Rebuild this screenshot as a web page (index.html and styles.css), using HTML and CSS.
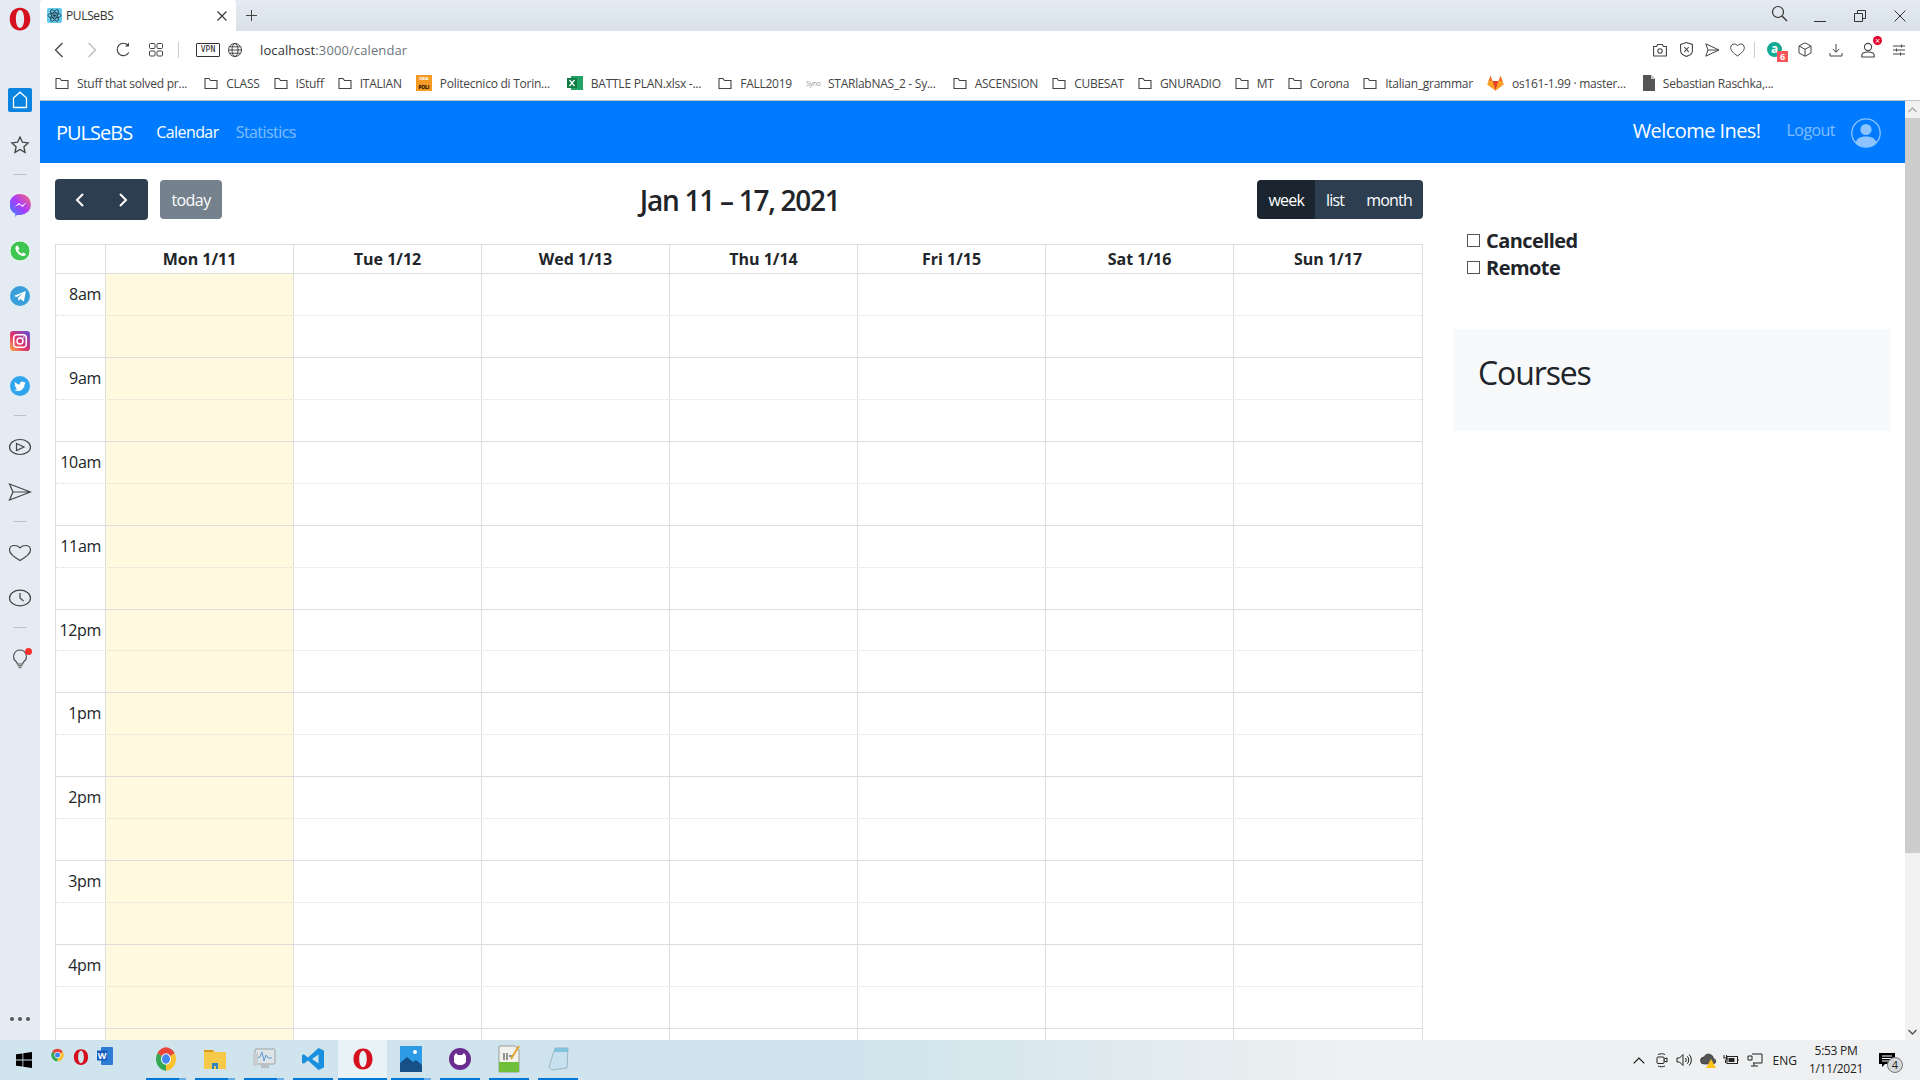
FILE: index.html
```html
<!DOCTYPE html>
<html lang="en">
<head>
    <meta charset="UTF-8">
    <title>PULSeBS</title>
    <link rel="stylesheet" href="styles.css">
</head>
<body>
<svg class="defs" width="0" height="0">
    <defs>
        <symbol id="folder" viewBox="0 0 14 14"><path d="M1 2.500h4l1.500 2h6.500v8H1z" fill="none" stroke="#444" stroke-width="1.100"/></symbol>
        <symbol id="chrome" viewBox="0 0 24 24">
            <path d="M12 12L3.340 7A10 10 0 0 1 20.660 7Z" fill="#e8453c"/>
            <path d="M12 12L20.660 7A10 10 0 0 1 12 22Z" fill="#fbc02d"/>
            <path d="M12 12L12 22A10 10 0 0 1 3.340 7Z" fill="#34a853"/>
            <circle cx="12" cy="12" r="5" fill="#fff"/><circle cx="12" cy="12" r="4" fill="#4285f4"/>
        </symbol>
        <symbol id="opera" viewBox="0 0 24 24">
            <path fill-rule="evenodd" d="M12 1.500c6 0 9.500 4.600 9.500 10.500S18 22.500 12 22.500 2.500 17.900 2.500 12 6 1.500 12 1.500zM12 3.800c-2.300 0-3.800 3.600-3.800 8.200s1.500 8.200 3.800 8.200 3.800-3.600 3.800-8.200S14.300 3.800 12 3.800z" fill="#d5101f"/>
        </symbol>
        <linearGradient id="insta" x1="0" y1="1" x2="1" y2="0">
            <stop offset="0" stop-color="#fdb045"/><stop offset=".45" stop-color="#e1306c"/><stop offset="1" stop-color="#5b51d8"/>
        </linearGradient>
        <linearGradient id="msgr" x1="0" y1="1" x2="1" y2="0">
            <stop offset="0" stop-color="#2f8bff"/><stop offset=".5" stop-color="#a83bff"/><stop offset="1" stop-color="#ff6a6a"/>
        </linearGradient>
    </defs>
</svg>

<div class="desktop">
    <div class="window">
        <aside class="sidebar">
            <div class="side-logo"><svg width="26" height="26"><use href="#opera"/></svg></div>
            <div class="side-home">
                <svg width="16" height="18" viewBox="0 0 16 18"><path d="M1.500 7L8 1.200 14.500 7v9.500h-13z" fill="none" stroke="#fff" stroke-width="1.300"/></svg>
            </div>
            <div class="side-item">
                <svg width="20" height="20" viewBox="0 0 24 24"><path d="M12 2.500l2.900 6.200 6.800.8-5 4.600 1.300 6.700-6-3.400-6 3.400 1.300-6.700-5-4.600 6.800-.8z" fill="none" stroke="#444" stroke-width="1.600"/></svg>
            </div>
            <div class="side-sep"></div>
            <div class="side-item">
                <svg width="21" height="23" viewBox="0 0 20 22"><path d="M10 0a10 10 0 0 1 0 20l-3.500.2-1.500 1.800v-3A10 10 0 0 1 10 0z" fill="url(#msgr)"/><path d="M4.500 12.500l4-4 3 2.500 4.500-3-4 4.500-3-2.500z" fill="#fff"/></svg>
            </div>
            <div class="side-item">
                <svg width="22" height="22" viewBox="0 0 24 24"><circle cx="12" cy="12" r="11" fill="#3fc551" stroke="#fff"/><path d="M9 6c-.8 0-2 1-2 2.800 0 4 4.600 8.700 8.800 8.700 1.700 0 2.700-1.200 2.700-2.200 0-.4-2.600-1.800-3.100-1.800-.5 0-1 1.200-1.500 1.200-.9 0-3.600-2.400-3.700-3.600 0-.5 1.100-1 1.100-1.500C11.300 9 9.800 6 9 6z" fill="#fff"/></svg>
            </div>
            <div class="side-item">
                <svg width="20" height="20" viewBox="0 0 24 24"><circle cx="12" cy="12" r="12" fill="#37a0da"/><path d="M4.500 12l14.500-6-2.300 12.500-4.200-3-2.300 2.200-.5-3.700 6-5.500-7.500 4.700z" fill="#fff"/></svg>
            </div>
            <div class="side-item">
                <svg width="20" height="20" viewBox="0 0 24 24"><rect width="24" height="24" rx="4" fill="url(#insta)"/><rect x="4.500" y="4.500" width="15" height="15" rx="4" fill="none" stroke="#fff" stroke-width="1.800"/><circle cx="12" cy="12" r="3.600" fill="none" stroke="#fff" stroke-width="1.800"/><circle cx="16.500" cy="7.500" r="1" fill="#fff"/></svg>
            </div>
            <div class="side-item">
                <svg width="20" height="20" viewBox="0 0 24 24"><circle cx="12" cy="12" r="12" fill="#2fa5ee"/><g transform="translate(5 5.500) scale(.58)"><path d="M23.953 4.570a10 10 0 01-2.825.775 4.958 4.958 0 002.163-2.723c-.951.555-2.005.959-3.127 1.184a4.920 4.920 0 00-8.384 4.482C7.690 8.095 4.067 6.130 1.640 3.162a4.822 4.822 0 00-.666 2.475c0 1.710.870 3.213 2.188 4.096a4.904 4.904 0 01-2.228-.616v.060a4.923 4.923 0 003.946 4.827 4.996 4.996 0 01-2.212.085 4.936 4.936 0 004.604 3.417 9.867 9.867 0 01-6.102 2.105c-.390 0-.779-.023-1.170-.067a13.995 13.995 0 007.557 2.209c9.053 0 13.998-7.496 13.998-13.985 0-.210 0-.420-.015-.630A9.935 9.935 0 0024 4.590z" fill="#fff"/></g></svg>
            </div>
            <div class="side-sep"></div>
            <div class="side-item">
                <svg width="24" height="18" viewBox="0 0 24 18"><ellipse cx="12" cy="9" rx="10.500" ry="7.500" fill="none" stroke="#444" stroke-width="1.200"/><path d="M8.500 5.500L16 9l-7.500 3.500z" fill="none" stroke="#444" stroke-width="1.200"/></svg>
            </div>
            <div class="side-item">
                <svg width="24" height="18" viewBox="0 0 24 18"><path d="M1.500 1L22.500 9 1.500 17 5 9zM5 9h17.500" fill="none" stroke="#444" stroke-width="1.200"/></svg>
            </div>
            <div class="side-sep"></div>
            <div class="side-item">
                <svg width="24" height="18" viewBox="0 0 24 18"><path d="M12 16.500C5 12.500 1.500 9.800 1.500 6 1.500 3.400 3.600 1.500 6.200 1.500c2.400 0 4.300.7 5.800 2.300 1.500-1.600 3.400-2.300 5.800-2.300 2.600 0 4.700 1.900 4.700 4.500 0 3.800-3.500 6.500-10.500 10.500z" fill="none" stroke="#444" stroke-width="1.200"/></svg>
            </div>
            <div class="side-item">
                <svg width="24" height="18" viewBox="0 0 24 18"><ellipse cx="12" cy="9" rx="10.500" ry="7.800" fill="none" stroke="#444" stroke-width="1.200"/><path d="M12 4v5l3.500 3" fill="none" stroke="#444" stroke-width="1.200"/></svg>
            </div>
            <div class="side-sep"></div>
            <div class="side-item side-bulb">
                <svg width="18" height="20" viewBox="0 0 18 20"><path d="M9 1a6.500 6.500 0 0 0-4 11.500c.8.800 1.200 1.500 1.300 2.500h5.400c.1-1 .5-1.700 1.300-2.500A6.500 6.500 0 0 0 9 1z" fill="none" stroke="#555" stroke-width="1.200"/><path d="M6.500 16.500h5M7.500 18.500h3" stroke="#777" stroke-width="1.400"/></svg>
                <span class="bulb-dot"></span>
            </div>
            <div class="side-more"><i></i><i></i><i></i></div>
        </aside>

        <div class="browser">
            <div class="tabbar">
                <div class="tab">
                    <svg class="favicon" width="15" height="15" viewBox="0 0 15 15"><rect width="15" height="15" rx="2" fill="#61c9ea"/><g fill="none" stroke="#24323d" stroke-width=".8"><ellipse cx="7.500" cy="7.500" rx="6.500" ry="2.600"/><ellipse cx="7.500" cy="7.500" rx="6.500" ry="2.600" transform="rotate(60 7.500 7.500)"/><ellipse cx="7.500" cy="7.500" rx="6.500" ry="2.600" transform="rotate(120 7.500 7.500)"/></g><circle cx="7.500" cy="7.500" r="1.300" fill="#24323d"/></svg>
                    <span class="tab-title">PULSeBS</span>
                    <svg class="tab-close" width="10" height="10" viewBox="0 0 10 10"><path d="M.5.500l9 9M9.500.500l-9 9" stroke="#333" stroke-width="1.100"/></svg>
                </div>
                <svg class="tab-plus" width="11" height="11" viewBox="0 0 11 11"><path d="M5.500 0v11M0 5.500h11" stroke="#444"/></svg>
                <div class="win-controls">
                    <svg class="ctl-search" width="17" height="17" viewBox="0 0 17 17"><circle cx="7" cy="7" r="5.500" fill="none" stroke="#333" stroke-width="1.200"/><path d="M11 11l5 5" stroke="#333" stroke-width="1.400"/></svg>
                    <svg class="ctl-btn" width="12" height="12" viewBox="0 0 12 12"><path d="M0 11.500h12" stroke="#333"/></svg>
                    <svg class="ctl-btn" width="12" height="12" viewBox="0 0 12 12"><path d="M.5 3.500h8v8h-8zM3.500 3.500v-3h8v8h-3" fill="none" stroke="#333"/></svg>
                    <svg class="ctl-btn" width="12" height="12" viewBox="0 0 12 12"><path d="M.5.500l11 11M11.500.500l-11 11" stroke="#333"/></svg>
                </div>
            </div>

            <div class="addressbar">
                <svg class="ab-back" width="10" height="16" viewBox="0 0 10 16"><path d="M8.500 1L1.500 8l7 7" fill="none" stroke="#444" stroke-width="1.300"/></svg>
                <svg class="ab-fwd" width="10" height="16" viewBox="0 0 10 16"><path d="M1.500 1l7 7-7 7" fill="none" stroke="#bbb" stroke-width="1.300"/></svg>
                <svg class="ab-reload" width="15" height="15" viewBox="0 0 15 15"><path d="M12.800 10.500A6.200 6.200 0 1 1 12 3.300" fill="none" stroke="#444" stroke-width="1.200"/><path d="M13 .5v4h-4z" fill="#444"/></svg>
                <svg class="ab-grid" width="14" height="14" viewBox="0 0 14 14"><g fill="none" stroke="#444"><rect x=".5" y=".5" width="5.500" height="5" rx="1"/><rect x="8" y=".5" width="5.500" height="5" rx="1"/><rect x=".5" y="8" width="5.500" height="5" rx="1"/><rect x="8" y="8" width="5.500" height="5" rx="1"/></g></svg>
                <span class="ab-sep"></span>
                <span class="vpn">VPN</span>
                <svg class="ab-globe" width="14" height="14" viewBox="0 0 14 14"><g fill="none" stroke="#333" stroke-width=".9"><circle cx="7" cy="7" r="6.500"/><ellipse cx="7" cy="7" rx="3" ry="6.500"/><path d="M.5 7h13M1.500 3.800h11M1.500 10.200h11"/></g></svg>
                <span class="url">localhost<span class="url-dim">:3000/calendar</span></span>
                <div class="ab-tools">
                    <svg class="t-camera" width="14" height="14" viewBox="0 0 14 14"><path d="M.6 3.500h3l1-2h4.800l1 2h3v9.500H.6z" fill="none" stroke="#444" stroke-width="1.100"/><circle cx="7" cy="8" r="2.200" fill="none" stroke="#444" stroke-width="1.100"/></svg>
                    <svg class="t-shield" width="13" height="15" viewBox="0 0 13 15"><path d="M6.500.6L12.400 2.500V9c0 2.500-3 4.500-5.900 5.400C3.600 13.500.6 11.500.6 9V2.500z" fill="none" stroke="#444" stroke-width="1.100"/><path d="M4.300 5l4.400 4.800M8.700 5L4.300 9.800" stroke="#444" stroke-width="1.100"/></svg>
                    <svg class="t-send" width="15" height="14" viewBox="0 0 15 14"><path d="M.8.800L14 7 .8 13.200 3 7zM3 7h11" fill="none" stroke="#444" stroke-width="1"/></svg>
                    <svg class="t-heart" width="15" height="14" viewBox="0 0 15 14"><path d="M7.500 13C3 9.800.7 7.500.7 4.600.7 2.500 2.300 1 4.300 1c1.300 0 2.500.6 3.200 1.800C8.200 1.600 9.400 1 10.700 1c2 0 3.600 1.500 3.600 3.600 0 2.900-2.300 5.200-6.800 8.400z" fill="none" stroke="#444" stroke-width="1"/></svg>
                    <span class="t-sep"></span>
                    <span class="t-ext"><span class="ext-a">a</span><span class="ext-badge">6</span></span>
                    <svg class="t-cube" width="14" height="15" viewBox="0 0 14 15"><path d="M7 .8l6 3.200v7L7 14.200 1 11V4zM1 4l6 3.300L13 4M7 7.300v6.900" fill="none" stroke="#444" stroke-width="1"/></svg>
                    <svg class="t-dl" width="14" height="14" viewBox="0 0 14 14"><path d="M7 1v8M3.800 6L7 9.300 10.200 6M1 10v3h12v-3" fill="none" stroke="#444" stroke-width="1"/></svg>
                    <span class="t-user">
                        <svg width="14" height="16" viewBox="0 0 14 16"><circle cx="7" cy="5" r="3.600" fill="none" stroke="#444" stroke-width="1.100"/><path d="M.8 15v-1.500C.8 11.500 3 10 7 10s6.200 1.500 6.200 3.500V15z" fill="none" stroke="#444" stroke-width="1.100"/></svg>
                        <span class="user-x">&times;</span>
                    </span>
                    <svg class="t-menu" width="14" height="12" viewBox="0 0 14 12"><path d="M1 2h12M1 6h12M1 10h12M9.500.5v3M4.500 4.500v3M8.500 8.500v3" fill="none" stroke="#444"/></svg>
                </div>
            </div>

            <div class="bookmarks">
                <a class="bm cut"><svg width="14" height="14"><use href="#folder"/></svg>Stuff that solved pr...</a>
                <a class="bm"><svg width="14" height="14"><use href="#folder"/></svg>CLASS</a>
                <a class="bm"><svg width="14" height="14"><use href="#folder"/></svg>IStuff</a>
                <a class="bm"><svg width="14" height="14"><use href="#folder"/></svg>ITALIAN</a>
                <a class="bm cut"><span class="ico-dida"><span>DIDA</span><span class="ico-dida-b">POLI</span></span>Politecnico di Torin...</a>
                <a class="bm cut"><svg width="16" height="16" viewBox="0 0 16 16"><rect x="4" y="1" width="12" height="14" fill="#21a366"/><rect y="3" width="10" height="10" fill="#107c41"/><path d="M2.500 5l5 6M7.500 5l-5 6" stroke="#fff" stroke-width="1.300"/></svg>BATTLE PLAN.xlsx -...</a>
                <a class="bm"><svg width="14" height="14"><use href="#folder"/></svg>FALL2019</a>
                <a class="bm cut"><span class="ico-syno">Syno</span>STARlabNAS_2 - Sy...</a>
                <a class="bm"><svg width="14" height="14"><use href="#folder"/></svg>ASCENSION</a>
                <a class="bm"><svg width="14" height="14"><use href="#folder"/></svg>CUBESAT</a>
                <a class="bm"><svg width="14" height="14"><use href="#folder"/></svg>GNURADIO</a>
                <a class="bm"><svg width="14" height="14"><use href="#folder"/></svg>MT</a>
                <a class="bm"><svg width="14" height="14"><use href="#folder"/></svg>Corona</a>
                <a class="bm"><svg width="14" height="14"><use href="#folder"/></svg>Italian_grammar</a>
                <a class="bm cut"><svg width="17" height="16" viewBox="0 0 17 16"><path d="M8.500 15.500L.5 9.500 1.500 6 3.500 .5 5.500 6h6L13.500 .5 15.500 6l1 3.500z" fill="#fc6d26"/><path d="M8.500 15.500L5.500 6h6z" fill="#e24329"/><path d="M8.500 15.500L.5 9.500 1.500 6h4zM8.500 15.500l8-6-1-3.500h-4z" fill="#fca326"/></svg>os161-1.99 &middot; master...</a>
                <a class="bm"><svg width="12" height="16" viewBox="0 0 12 16"><path d="M0 0h8l4 4v12H0z" fill="#555"/><path d="M8 0v4h4z" fill="#ccc"/></svg>Sebastian Raschka,...</a>
            </div>

            <div class="viewport">
                <div class="page">
                    <nav class="navbar">
                        <span class="brand">PULSeBS</span>
                        <a class="nav-link active">Calendar</a>
                        <a class="nav-link">Statistics</a>
                        <span class="welcome">Welcome Ines!</span>
                        <a class="nav-link logout">Logout</a>
                        <svg class="avatar" width="30" height="30" viewBox="0 0 30 30"><circle cx="15" cy="15" r="14.200" fill="none" stroke="#8dc4ff" stroke-width="1.300"/><circle cx="15" cy="11.500" r="5.600" fill="#8dc4ff"/><path d="M4.500 24.500C6 20 10 18.500 15 18.500s9 1.500 10.500 6C23 27.500 19.500 29 15 29s-8-1.500-10.500-4.500z" fill="#8dc4ff"/></svg>
                    </nav>

                    <div class="content">
                        <div class="cal">
                            <div class="cal-toolbar">
                                <div class="cal-left">
                                    <div class="btn-group nav-group">
                                        <button class="fc-btn">
                                            <svg width="10" height="16" viewBox="0 0 10 16"><path d="M8 2L2 8l6 6" fill="none" stroke="#fff" stroke-width="2"/></svg>
                                        </button>
                                        <button class="fc-btn">
                                            <svg width="10" height="16" viewBox="0 0 10 16"><path d="M2 2l6 6-6 6" fill="none" stroke="#fff" stroke-width="2"/></svg>
                                        </button>
                                    </div>
                                    <button class="fc-btn today-btn">today</button>
                                </div>
                                <h2 class="cal-title">Jan 11 &ndash; 17, 2021</h2>
                                <div class="btn-group">
                                    <button class="fc-btn view-btn active">week</button>
                                    <button class="fc-btn view-btn">list</button>
                                    <button class="fc-btn view-btn">month</button>
                                </div>
                            </div>

                            <div class="cal-grid">
                                <div class="cal-head">
                                    <div class="cal-hcell"></div>
                                    <div class="cal-hcell">Mon 1/11</div>
                                    <div class="cal-hcell">Tue 1/12</div>
                                    <div class="cal-hcell">Wed 1/13</div>
                                    <div class="cal-hcell">Thu 1/14</div>
                                    <div class="cal-hcell">Fri 1/15</div>
                                    <div class="cal-hcell">Sat 1/16</div>
                                    <div class="cal-hcell">Sun 1/17</div>
                                </div>
                                <div class="cal-body">
                                    <div class="cal-cols">
                                        <div></div><div class="today"></div><div></div><div></div><div></div><div></div><div></div><div></div>
                                    </div>
                                    <div class="slot hour"><span>8am</span></div><div class="slot"></div>
                                    <div class="slot hour"><span>9am</span></div><div class="slot"></div>
                                    <div class="slot hour"><span>10am</span></div><div class="slot"></div>
                                    <div class="slot hour"><span>11am</span></div><div class="slot"></div>
                                    <div class="slot hour"><span>12pm</span></div><div class="slot"></div>
                                    <div class="slot hour"><span>1pm</span></div><div class="slot"></div>
                                    <div class="slot hour"><span>2pm</span></div><div class="slot"></div>
                                    <div class="slot hour"><span>3pm</span></div><div class="slot"></div>
                                    <div class="slot hour"><span>4pm</span></div><div class="slot"></div>
                                    <div class="slot hour"></div>
                                </div>
                            </div>
                        </div>

                        <div class="side-col">
                            <div class="filters">
                                <label class="filter"><input type="checkbox">Cancelled</label>
                                <label class="filter"><input type="checkbox">Remote</label>
                            </div>
                            <div class="courses"><h1>Courses</h1></div>
                        </div>
                    </div>
                </div>

                <div class="scrollbar">
                    <div class="sb-arrow"><svg width="9" height="6" viewBox="0 0 9 6"><path d="M.5 5L4.500 1l4 4" fill="none" stroke="#aaa" stroke-width="1.400"/></svg></div>
                    <div class="sb-thumb"></div>
                    <div class="sb-arrow sb-down"><svg width="9" height="6" viewBox="0 0 9 6"><path d="M.5 1l4 4 4-4" fill="none" stroke="#555" stroke-width="1.400"/></svg></div>
                </div>
            </div>
        </div>
    </div>

    <footer class="taskbar">
        <svg class="tb-start" width="16" height="16" viewBox="0 0 16 16"><path d="M0 2.300l6.500-.9v6.200H0zM7.300 1.300L16 0v7.600H7.300zM0 8.400h6.500v6.200L0 13.700zM7.300 8.400H16V16l-8.700-1.300z" fill="#000"/></svg>
        <div class="tb-quick">
            <svg width="15" height="16"><use href="#chrome"/></svg>
            <svg width="18" height="20"><use href="#opera"/></svg>
            <svg width="16" height="18" viewBox="0 0 16 18"><rect x="4" width="12" height="18" rx="1" fill="#2b7cd3"/><rect y="3.500" width="10" height="10" fill="#185abd"/><text x="5" y="11.500" class="tb-w">W</text></svg>
        </div>
        <div class="tb-apps">
            <div class="tb-app stacked"><svg width="24" height="28" viewBox="0 0 24 24" preserveAspectRatio="none"><use href="#chrome"/></svg></div>
            <div class="tb-app stacked"><svg width="22" height="20" viewBox="0 0 22 20"><path d="M0 1h9l2 2h11v17H0z" fill="#f7c948"/><path d="M0 1h9l1 2H0z" fill="#d99a1e"/><path d="M8 14h6v6h-2v-3h-2v3H8z" fill="#2f83c4"/></svg></div>
            <div class="tb-app stacked"><svg width="24" height="24" viewBox="0 0 24 24"><rect x="3" y="2" width="20" height="15" rx="1" fill="#dfe4e6" stroke="#9aa3a8"/><path d="M5 11l3-1 2-5 2 9 2-6 2 3h4" fill="none" stroke="#5a9bd4"/><rect x="9" y="17" width="8" height="4" fill="#b8bec2"/><rect x="1" y="6" width="5" height="13" fill="#c8cdd0"/></svg></div>
            <div class="tb-app"><svg width="24" height="28" viewBox="0 0 24 24"><path fill-rule="evenodd" d="M17.500 1L23 3.600v16.800L17.500 23 7 13.500 2.800 16.800 1 15.700V8.300l1.800-1.100L7 10.500zM17.500 7.500L11 12l6.500 4.500z" fill="#1a8fdf"/></svg></div>
            <div class="tb-app focused"><svg width="24" height="28"><use href="#opera"/></svg></div>
            <div class="tb-app stacked"><svg width="22" height="26" viewBox="0 0 22 26"><rect width="22" height="26" fill="#2e9be6"/><path d="M0 26V17l7-6 6 5 3-2 6 5v7z" fill="#174f87"/><circle cx="15" cy="6" r="2" fill="#fff"/></svg></div>
            <div class="tb-app"><svg width="24" height="26" viewBox="0 0 24 26"><circle cx="12" cy="13" r="11" fill="#6c2d91"/><path d="M6 10l2-3 2 2h4l2-2 2 3v5c0 2-2 4-6 4s-6-2-6-4z" fill="#fff"/></svg></div>
            <div class="tb-app"><svg width="24" height="28" viewBox="0 0 24 28"><path d="M2 1h16l4 4v22H2z" fill="#f2f2ee" stroke="#8c8c80" stroke-width=".8"/><rect x="2" y="17" width="20" height="10" fill="#6fbf3a"/><path d="M7 8v7M10 8v7M12 11h4" stroke="#333"/><path d="M22 1l-8 13" stroke="#e0a52b" stroke-width="2"/></svg></div>
            <div class="tb-app"><svg width="24" height="26" viewBox="0 0 24 26"><path d="M9 2h13l-1 20-15 2-3-3z" fill="#c7e2ee" stroke="#8daab8" stroke-width=".8"/><path d="M9 2h13v4H8z" fill="#7fc3dc"/></svg></div>
        </div>

        <div class="tray">
            <svg class="tr-chev" width="12" height="7" viewBox="0 0 12 7"><path d="M.7 6.300L6 1l5.300 5.300" fill="none" stroke="#111" stroke-width="1.100"/></svg>
            <svg class="tr-meet" width="12" height="16" viewBox="0 0 12 16"><rect x="1" y="5" width="7" height="6.500" rx="1" fill="none" stroke="#222"/><path d="M8 7l3-1v4l-3-1M2 2.500c2-1 5-1 7 0M2 14c2 1 5 1 7 0" fill="none" stroke="#222"/></svg>
            <svg class="tr-vol" width="16" height="14" viewBox="0 0 16 14"><path d="M1 5h2.500L7 1.500v11L3.500 9H1zM9.500 5a3 3 0 0 1 0 4M11.300 3.300a5.500 5.500 0 0 1 0 7.400M13.200 1.500a8 8 0 0 1 0 11" fill="none" stroke="#222"/></svg>
            <svg class="tr-cloud" width="17" height="16" viewBox="0 0 17 16"><path d="M4 12a3.500 3.500 0 0 1 0-7 5 5 0 0 1 9.500 1.500A2.800 2.800 0 0 1 13.500 12z" fill="#555" stroke="#222" stroke-width=".6"/><path d="M11 7l5 9H6z" fill="#fcc419"/></svg>
            <svg class="tr-batt" width="16" height="12" viewBox="0 0 16 12"><rect x="4" y="2.500" width="10.500" height="7" fill="none" stroke="#222"/><rect x="5.500" y="4" width="6" height="4" fill="#222"/><path d="M15 5v2M1 1v3M3.500 1v3M.5 4h3.500v2H2.500v3" fill="none" stroke="#222"/></svg>
            <svg class="tr-net" width="16" height="14" viewBox="0 0 16 14"><path d="M5 1h10v9H6M7 10v3M4 13h7M1 3h4v4H1z" fill="none" stroke="#222"/></svg>
            <span class="tr-lang">ENG</span>
            <div class="tr-clock"><span>5:53 PM</span><span>1/11/2021</span></div>
            <div class="tr-notif">
                <svg width="16" height="14" viewBox="0 0 16 14"><path d="M0 0h16v11H6l-3 3v-3H0z" fill="#000"/><path d="M3 3h10M3 5.500h10M3 8h7" stroke="#fff"/></svg>
                <span class="notif-count">4</span>
            </div>
        </div>
    </footer>
</div>
</body>
</html>
```

FILE: styles.css
```css
* {
    box-sizing: border-box;
}

html, body {
    margin: 0;
    height: 100%;
    overflow: hidden;
}

body {
    font-family: "Open Sans", "Noto Sans", sans-serif;
    color: #212529;
    background: #fff;
}

svg {
    display: block;
    flex: none;
}

.defs {
    position: absolute;
}

.desktop {
    display: flex;
    flex-direction: column;
    height: 1080px;
}

.window {
    display: flex;
    flex: 1;
    min-height: 0;
}

/* sidebar */
.sidebar {
    width: 40px;
    background: #e4ebf3;
    display: flex;
    flex-direction: column;
    align-items: center;
}

.side-logo {
    height: 38px;
    padding-top: 6px;
}

.side-home {
    width: 24px;
    height: 24px;
    margin-top: 50px;
    background: #0a84e0;
    border-radius: 2px;
    display: flex;
    align-items: center;
    justify-content: center;
}

.side-item {
    width: 40px;
    height: 45px;
    display: flex;
    align-items: center;
    justify-content: center;
    position: relative;
}

.side-home + .side-item {
    margin-top: 10px;
}

.side-sep {
    width: 12px;
    height: 1px;
    background: #b9c2cb;
    margin: 7px 0;
}

.side-sep + .side-item {
    margin-top: 1px;
}

.bulb-dot {
    position: absolute;
    top: 12px;
    right: 8px;
    width: 7px;
    height: 7px;
    border-radius: 50%;
    background: #f9312f;
}

.side-more {
    margin-top: auto;
    margin-bottom: 19px;
    display: flex;
    gap: 4px;
}

.side-more i {
    width: 4px;
    height: 4px;
    border-radius: 50%;
    background: #555;
}

/* browser chrome */
.browser {
    flex: 1;
    min-width: 0;
    display: flex;
    flex-direction: column;
}

.tabbar {
    height: 31px;
    background: linear-gradient(#e4ebf3, #d9e1e8);
    display: flex;
    align-items: center;
}

.tab {
    width: 196px;
    height: 31px;
    background: #fff;
    border-radius: 3px 3px 0 0;
    display: flex;
    align-items: center;
    padding: 0 9px 0 7px;
}

.tab-title {
    font-size: 12px;
    margin-left: 4px;
    color: #333;
    letter-spacing: -0.03em;
}

.tab-close {
    margin-left: auto;
}

.tab-plus {
    margin-left: 10px;
}

.win-controls {
    margin-left: auto;
    display: flex;
    align-items: center;
    padding-right: 14px;
}

.ctl-search {
    margin-right: 26px;
    margin-top: -4px;
}

.ctl-btn {
    margin-left: 28px;
}

.ctl-search + .ctl-btn {
    margin-left: 0;
}

.addressbar {
    height: 35px;
    background: #fff;
    display: flex;
    align-items: center;
    padding: 2px 0 0 14px;
}

.ab-fwd {
    margin-left: 23px;
}

.ab-reload {
    margin-left: 19px;
}

.ab-grid {
    margin-left: 18px;
}

.ab-sep {
    width: 1px;
    height: 16px;
    background: #ccc;
    margin-left: 15px;
}

.vpn {
    margin-left: 17px;
    width: 24px;
    height: 14px;
    border: 1px solid #333;
    border-radius: 1px;
    font-size: 8px;
    line-height: 12px;
    text-align: center;
    font-family: "DejaVu Sans Mono", monospace;
    color: #222;
}

.ab-globe {
    margin-left: 8px;
}

.url {
    margin-left: 18px;
    font-size: 13px;
    letter-spacing: 0.1px;
    color: #333;
}

.url-dim {
    color: #6c757d;
}

.ab-tools {
    margin-left: auto;
    display: flex;
    align-items: center;
    padding-right: 14px;
}

.t-shield {
    margin-left: 13px;
}

.t-send {
    margin-left: 12px;
}

.t-heart {
    margin-left: 10px;
}

.t-sep {
    width: 1px;
    height: 16px;
    background: #ccc;
    margin-left: 9px;
}

.t-ext {
    margin-left: 12px;
    position: relative;
    width: 15px;
    height: 15px;
    border-radius: 50%;
    background: #12a894;
    color: #fff;
    font-size: 12px;
    font-weight: 700;
    line-height: 13px;
    text-align: center;
}

.ext-badge {
    position: absolute;
    left: 10px;
    top: 9px;
    width: 11px;
    height: 11px;
    background: #f9545a;
    font-size: 9px;
    line-height: 11px;
}

.t-cube {
    margin-left: 16px;
}

.t-dl {
    margin-left: 17px;
}

.t-user {
    margin-left: 18px;
    position: relative;
}

.user-x {
    position: absolute;
    top: -6px;
    right: -7px;
    width: 9px;
    height: 9px;
    border-radius: 50%;
    background: #e3002b;
    color: #fff;
    font-size: 9px;
    line-height: 9px;
    text-align: center;
}

.t-menu {
    margin-left: 17px;
}

.bookmarks {
    height: 35px;
    background: #fff;
    border-bottom: 1px solid #bcc5ce;
    display: flex;
    align-items: center;
    gap: 14px;
    padding-left: 15px;
    font-size: 12px;
    letter-spacing: -0.25px;
    color: #444;
}

.bm {
    display: flex;
    align-items: center;
    gap: 8px;
    white-space: nowrap;
}

.bm.cut {
    margin-right: 3px;
}

.ico-dida {
    width: 16px;
    height: 16px;
    background: #f59a23;
    font-size: 4px;
    line-height: 8px;
    color: #fff;
    text-align: center;
    display: flex;
    flex-direction: column;
    font-weight: 700;
}

.ico-dida-b {
    background: #f59a23;
    color: #000;
    font-size: 5px;
}

.ico-syno {
    font-size: 7px;
    color: #999;
    width: 14px;
}

/* page */
.viewport {
    flex: 1;
    min-height: 0;
    display: flex;
}

.page {
    flex: 1;
    min-width: 0;
    overflow: hidden;
    background: #fff;
    letter-spacing: -0.035em;
}

.navbar {
    height: 62px;
    background: #007bff;
    display: flex;
    align-items: center;
    padding: 0 24px 0 16px;
    color: #fff;
}

.brand {
    font-size: 20px;
    margin-right: 24px;
    letter-spacing: -0.05em;
}

.nav-link {
    font-size: 16px;
    color: rgba(255, 255, 255, 0.5);
    margin-right: 17px;
}

.nav-link.active {
    color: #fff;
}

.welcome {
    margin-left: auto;
    font-size: 20px;
    margin-right: 26px;
    padding-bottom: 4px;
}

.logout {
    margin-right: 16px;
    padding-bottom: 4px;
}

.avatar {
    margin-top: 2px;
}

.content {
    display: flex;
    padding: 16px 15px 0;
    gap: 31px;
}

.cal {
    width: 1368px;
    flex: none;
}

.cal-toolbar {
    height: 41px;
    display: flex;
    align-items: center;
    justify-content: space-between;
    margin-bottom: 24px;
}

.cal-left {
    display: flex;
    align-items: center;
    gap: 12px;
}

.cal-title {
    margin: 0;
    padding-top: 2px;
    font-size: 28px;
    font-weight: 550;
    letter-spacing: -0.045em;
    line-height: 1.2;
}

.btn-group {
    display: flex;
    border-radius: 4px;
    overflow: hidden;
}

.fc-btn {
    font-family: inherit;
    font-size: 16px;
    letter-spacing: inherit;
    line-height: 24px;
    height: 39px;
    padding: 0 11px;
    border: 0;
    color: #fff;
    background: #2c3e50;
    display: flex;
    align-items: center;
    justify-content: center;
}

.nav-group .fc-btn {
    width: 46.500px;
    height: 41px;
}

.nav-group .fc-btn:first-child {
    padding-left: 14px;
}

.nav-group .fc-btn:last-child {
    padding-right: 14px;
}

.today-btn {
    width: 62px;
    opacity: 0.65;
    border-radius: 4px;
}

.view-btn {
    letter-spacing: -0.05em;
}

.view-btn.active {
    background: #1a252f;
}

.cal-head {
    display: grid;
    grid-template-columns: 50px repeat(7, 1fr);
    height: 29px;
    border: 1px solid #ddd;
    border-bottom: 0;
}

.cal-hcell {
    border-right: 1px solid #ddd;
    font-size: 16px;
    font-weight: 700;
    letter-spacing: 0;
    line-height: 28px;
    text-align: center;
}

.cal-hcell:last-child {
    border-right: 0;
}

.cal-body {
    position: relative;
    border-left: 1px solid #ddd;
    border-right: 1px solid #ddd;
}

.cal-cols {
    position: absolute;
    inset: 0;
    display: grid;
    grid-template-columns: 50px repeat(7, 1fr);
}

.cal-cols div {
    border-right: 1px solid #ddd;
}

.cal-cols div:last-child {
    border-right: 0;
}

.cal-cols .today {
    background: #fff9e0;
}

.slot {
    position: relative;
    height: 41.950px;
    border-top: 1px dotted #ddd;
}

.slot.hour {
    border-top: 1px solid #ddd;
}

.slot span {
    display: block;
    width: 49px;
    padding-right: 4px;
    text-align: right;
    font-size: 16px;
    letter-spacing: -0.02em;
    line-height: 40px;
}

.side-col {
    width: 436px;
    flex: none;
}

.filters {
    padding: 48px 0 0 13px;
    height: 150px;
}

.filter {
    display: flex;
    align-items: center;
    font-size: 20px;
    font-weight: 700;
    line-height: 27px;
}

.filter input {
    appearance: none;
    margin: 0 6px 0 0;
    width: 13px;
    height: 13px;
    border: 1px solid #555;
    background: #fff;
}

.courses {
    height: 102px;
    background: #f8f9fa;
    padding: 24px;
}

.courses h1 {
    margin: 0;
    font-size: 32px;
    font-weight: 500;
    letter-spacing: -0.035em;
    line-height: 40px;
}

.scrollbar {
    width: 15px;
    background: #f1f1f1;
    display: flex;
    flex-direction: column;
}

.sb-arrow {
    height: 17px;
    display: flex;
    align-items: center;
    justify-content: center;
    flex: none;
}

.sb-thumb {
    height: 735px;
    background: #cdcdcd;
    flex: none;
}

.sb-down {
    margin-top: auto;
}

/* windows taskbar */
.taskbar {
    height: 40px;
    flex: none;
    display: flex;
    align-items: center;
    background: linear-gradient(90deg, #cfe4ec 0%, #cfe4ec 45%, #eef0f1 70%);
    padding-left: 16px;
    position: relative;
}

.tb-quick {
    display: flex;
    align-items: flex-start;
    gap: 7px;
    margin-left: 18px;
    width: 72px;
    height: 40px;
    padding-top: 7px;
}

.tb-w {
    font-size: 9px;
    font-weight: 700;
    fill: #fff;
    text-anchor: middle;
}

.tb-apps {
    display: flex;
    gap: 9px;
    margin-left: 24px;
}

.tb-app {
    width: 40px;
    height: 40px;
    display: flex;
    align-items: center;
    justify-content: center;
    border-bottom: 2px solid #0078d7;
}

.tb-app.stacked {
    border-image: linear-gradient(90deg, #0078d7 80%, #66aee7 80%) 1;
}

.tb-app.focused {
    background: #e9f3f7;
    width: 49px;
    margin: 0 -5px 0 -4px;
}

.tray {
    margin-left: auto;
    display: flex;
    align-items: center;
    color: #222;
    font-size: 12px;
}

.tr-meet {
    margin-left: 11px;
}

.tr-vol {
    margin-left: 8px;
}

.tr-cloud {
    margin-left: 8px;
}

.tr-batt {
    margin-left: 6px;
}

.tr-net {
    margin-left: 8px;
}

.tr-lang {
    margin-left: 10px;
    font-size: 12px;
}

.tr-clock {
    display: flex;
    flex-direction: column;
    align-items: center;
    width: 76px;
    margin-left: 1px;
    margin-right: 1px;
    line-height: 18px;
    letter-spacing: -0.3px;
}

.tr-notif {
    position: relative;
    margin: 0 25px 0 4px;
}

.notif-count {
    position: absolute;
    left: 8px;
    top: 4px;
    width: 16px;
    height: 16px;
    border-radius: 50%;
    background: #d5d8da;
    border: 1px solid #777;
    font-size: 11px;
    line-height: 14px;
    text-align: center;
}
```
